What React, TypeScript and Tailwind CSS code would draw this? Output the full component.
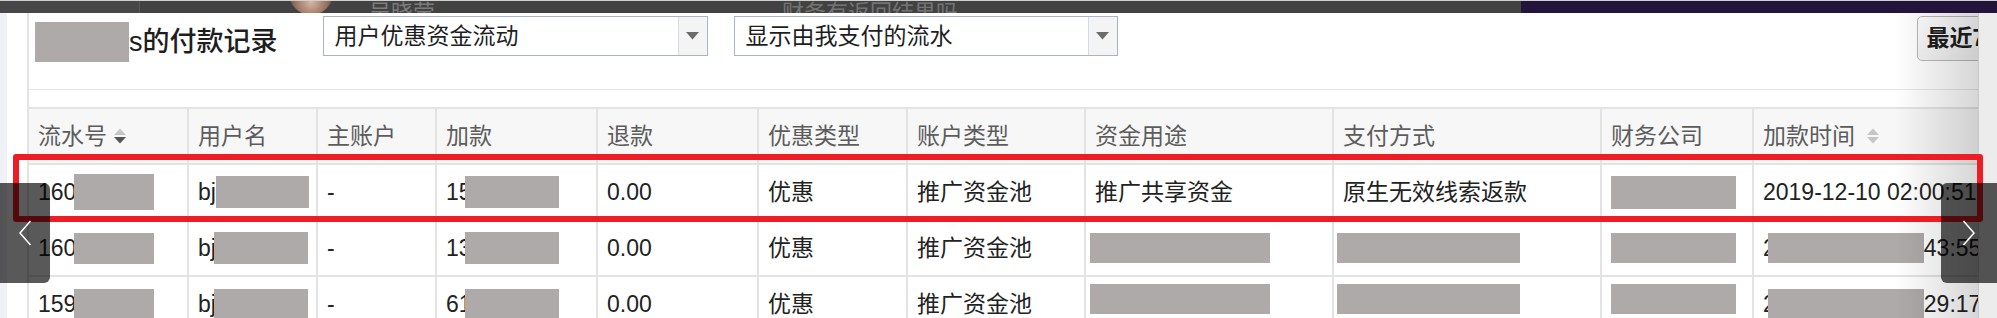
import type { ReactNode } from "react";

const COLS =
  "grid grid-cols-[160px_129px_119px_161px_161px_149px_178px_248px_268px_152px_260px]";

function SortIcon({ active = false }: { active?: boolean }) {
  return (
    <svg width="14" height="18" viewBox="0 0 14 18" className="shrink-0">
      <path d="M1 8 L7 1.5 L13 8 Z" fill="#c6c6c6" />
      <path d="M1 10 L13 10 L7 16.5 Z" fill={active ? "#555555" : "#c6c6c6"} />
    </svg>
  );
}

function Redact({ className }: { className: string }) {
  return <span className={`inline-block shrink-0 bg-[#aeaaa9] ${className}`} />;
}

function Cell({ children, head = false }: { children?: ReactNode; head?: boolean }) {
  return (
    <div
      className={`flex items-center overflow-hidden whitespace-nowrap border-r-2 border-[#e3e3e3] pl-[9px] leading-none ${
        head ? "text-[#5c5c5c]" : "text-[#222]"
      }`}
    >
      {children}
    </div>
  );
}

function Select({ label, className }: { label: string; className: string }) {
  return (
    <div className={`mt-[3px] flex h-[40px] shrink-0 border border-[#a9b3c4] bg-white ${className}`}>
      <div className="flex flex-1 items-center pl-[11px] text-[23px] leading-none text-[#1e1e1e]">{label}</div>
      <div className="flex w-[29px] items-center justify-center border-l border-[#d6dae1] bg-[#f4f4f4]">
        <svg width="13" height="8" viewBox="0 0 13 8">
          <path d="M0 0 L13 0 L6.5 7.5 Z" fill="#6b6b6b" />
        </svg>
      </div>
    </div>
  );
}

function Chevron({ dir }: { dir: "left" | "right" }) {
  return (
    <svg width="14" height="26" viewBox="0 0 14 26">
      <path
        d={dir === "left" ? "M12.5 1 L2 13 L12.5 25" : "M1.5 1 L12 13 L1.5 25"}
        stroke="#ffffff"
        strokeWidth="1.5"
        fill="none"
      />
    </svg>
  );
}

function TopBar() {
  return (
    <div className="flex h-[13px] flex-col">
      <div className="h-[1px] bg-[#cfcfcf]" />
      <div className="flex h-[12px] overflow-hidden">
        <div className="flex w-[1521px] shrink-0 items-start overflow-hidden bg-[#424242]">
          <div className="h-full w-[140px] shrink-0 border-r border-[#565656] bg-[#474747]" />
          <div className="ml-[149px] mt-[-30px] h-[44px] w-[44px] shrink-0 rounded-full bg-[radial-gradient(circle_at_50%_70%,#d8b7a0_0%,#9a7563_40%,#3f3636_72%)]" />
          <span className="ml-[36px] mt-[1px] shrink-0 text-[22px] leading-none text-[#7c7c7c]">吴晓莹</span>
          <span className="ml-[347px] mt-[1px] shrink-0 text-[22px] leading-none text-[#747474]">
            财务有返回结果吗
          </span>
        </div>
        <div className="flex-1 bg-[#22143b]" />
      </div>
    </div>
  );
}

function HeaderPanel() {
  return (
    <div className="flex h-[77px] items-start overflow-hidden border-b border-[#e6e6e6] pl-[6px]">
      <div className="mt-[9px] flex h-[40px] shrink-0 items-center">
        <Redact className="h-[40px] w-[94px]" />
        <span className="text-[27px] font-medium leading-none text-[#1e1e1e]">s的付款记录</span>
      </div>
      <Select label="用户优惠资金流动" className="ml-[45px] w-[385px]" />
      <Select label="显示由我支付的流水" className="ml-[26px] w-[384px]" />
      <button className="ml-[799px] mt-[3px] flex h-[45px] w-[110px] shrink-0 items-center rounded-[5px] border border-[#b9b9b9] bg-linear-to-b from-white to-[#f3f3f3] pl-[9px] text-[23px] font-semibold leading-none text-[#1e1e1e]">
        最近7天
      </button>
    </div>
  );
}

function Table() {
  return (
    <div className="border-t-2 border-[#e3e3e3] text-[23px]">
      <div className={`${COLS} h-[56px] border-b-2 border-[#e3e3e3] bg-[#f7f7f7]`}>
        <Cell head>
          流水号
          <span className="ml-[6px] flex">
            <SortIcon active />
          </span>
        </Cell>
        <Cell head>用户名</Cell>
        <Cell head>主账户</Cell>
        <Cell head>加款</Cell>
        <Cell head>退款</Cell>
        <Cell head>优惠类型</Cell>
        <Cell head>账户类型</Cell>
        <Cell head>资金用途</Cell>
        <Cell head>支付方式</Cell>
        <Cell head>财务公司</Cell>
        <Cell head>
          加款时间
          <span className="ml-[11px] flex">
            <SortIcon />
          </span>
        </Cell>
      </div>

      <div className={`${COLS} h-[56px] border-b-2 border-[#e3e3e3]`}>
        <Cell>
          160
          <Redact className="ml-[-2px] h-[36px] w-[80px]" />
        </Cell>
        <Cell>
          bj
          <Redact className="h-[32px] w-[93px]" />
        </Cell>
        <Cell>-</Cell>
        <Cell>
          15
          <Redact className="ml-[-7px] h-[32px] w-[94px]" />
        </Cell>
        <Cell>0.00</Cell>
        <Cell>优惠</Cell>
        <Cell>推广资金池</Cell>
        <Cell>推广共享资金</Cell>
        <Cell>原生无效线索返款</Cell>
        <Cell>
          <Redact className="h-[33px] w-[125px]" />
        </Cell>
        <Cell>2019-12-10 02:00:51</Cell>
      </div>

      <div className={`${COLS} h-[56px] border-b-2 border-[#e3e3e3]`}>
        <Cell>
          160
          <Redact className="ml-[-2px] h-[31px] w-[80px]" />
        </Cell>
        <Cell>
          bj
          <Redact className="ml-[-2px] h-[32px] w-[94px]" />
        </Cell>
        <Cell>-</Cell>
        <Cell>
          13
          <Redact className="ml-[-7px] h-[32px] w-[94px]" />
        </Cell>
        <Cell>0.00</Cell>
        <Cell>优惠</Cell>
        <Cell>推广资金池</Cell>
        <Cell>
          <Redact className="ml-[-5px] h-[30px] w-[180px]" />
        </Cell>
        <Cell>
          <Redact className="ml-[-6px] h-[30px] w-[183px]" />
        </Cell>
        <Cell>
          <Redact className="h-[30px] w-[125px]" />
        </Cell>
        <Cell>
          2
          <Redact className="ml-[-8px] h-[30px] w-[156px]" />
          43:55
        </Cell>
      </div>

      <div className={`${COLS} h-[56px] border-b-2 border-[#e3e3e3]`}>
        <Cell>
          159
          <Redact className="ml-[-2px] h-[31px] w-[80px]" />
        </Cell>
        <Cell>
          bj
          <Redact className="ml-[-2px] h-[31px] w-[94px]" />
        </Cell>
        <Cell>-</Cell>
        <Cell>
          61
          <Redact className="ml-[-7px] h-[31px] w-[94px]" />
        </Cell>
        <Cell>0.00</Cell>
        <Cell>优惠</Cell>
        <Cell>推广资金池</Cell>
        <Cell>
          <Redact className="mb-[10px] ml-[-5px] h-[30px] w-[180px]" />
        </Cell>
        <Cell>
          <Redact className="mb-[10px] ml-[-6px] h-[30px] w-[183px]" />
        </Cell>
        <Cell>
          <Redact className="mb-[10px] h-[30px] w-[125px]" />
        </Cell>
        <Cell>
          2
          <Redact className="ml-[-8px] h-[31px] w-[156px]" />
          29:17
        </Cell>
      </div>
    </div>
  );
}

export default function App() {
  return (
    <div className="relative h-[318px] w-[1997px] overflow-hidden bg-white font-['Liberation_Sans','Noto_Sans_CJK_SC',sans-serif]">
      <TopBar />
      <div className="flex h-[305px]">
        <div className="w-[7px] shrink-0 bg-[#eff1f6]" />
        <div className="w-[20px] shrink-0" />
        <div className="min-w-0 flex-1 overflow-hidden border-l-2 border-[#e3e3e3]">
          <HeaderPanel />
          <div className="h-[17px]" />
          <Table />
        </div>
      </div>

      {/* scroll shadow + scrollbar track */}
      <div className="pointer-events-none absolute bottom-0 left-[1895px] top-[13px] w-[83px] bg-linear-to-r from-transparent to-[rgba(0,0,0,0.16)]" />
      <div className="absolute bottom-0 right-0 top-[13px] w-[19px] border-l border-[#c9c9c9] bg-[#ececec]" />

      {/* annotation */}
      <div className="pointer-events-none absolute left-[13px] top-[154px] h-[68px] w-[1970px] rounded-[3px] border-[6px] border-[#ee1d23]" />

      {/* gallery nav */}
      <div className="absolute left-0 top-[183px] flex h-[100px] w-[50px] items-center justify-center rounded-r-[6px] bg-[rgba(0,0,0,0.65)]">
        <Chevron dir="left" />
      </div>
      <div className="absolute right-0 top-[183px] flex h-[100px] w-[56px] items-center justify-center rounded-l-[6px] bg-[rgba(0,0,0,0.65)]">
        <Chevron dir="right" />
      </div>
    </div>
  );
}
